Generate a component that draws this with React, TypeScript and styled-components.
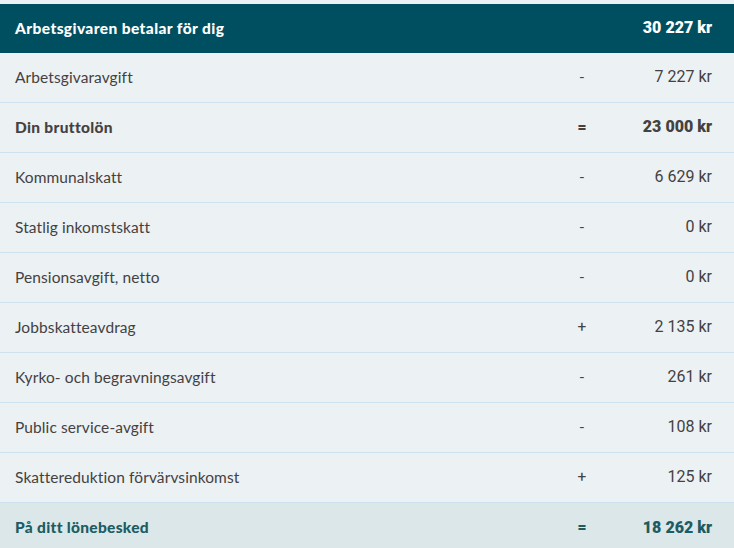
import React from "react";
import styled, { createGlobalStyle } from "styled-components";

const Global = createGlobalStyle`
  html, body { margin: 0; padding: 0; background: #ecf1f4; }
  body { font-family: Lato, "Open Sans", sans-serif; }
`;

const Page = styled.div`
  padding-top: 4px;
  width: 734px;
`;

const Table = styled.div`
  display: flex;
  flex-direction: column;
`;

type Variant = "head" | "normal" | "bold" | "total";

const Row = styled.div<{ $v: Variant }>`
  display: grid;
  grid-template-columns: 1fr 40px 110px;
  align-items: center;
  padding: 0 22px 2px 15px;
  box-sizing: border-box;
  height: ${(p) => (p.$v === "head" ? "49px" : "50px")};
  background: ${(p) =>
    p.$v === "head" ? "#004f60" : p.$v === "total" ? "#dbe7e8" : "#ecf1f4"};
  color: ${(p) =>
    p.$v === "head" ? "#ffffff" : p.$v === "total" ? "#1c5c62" : "#444142"};
  border-bottom: ${(p) =>
    p.$v === "normal" || p.$v === "bold" ? "1px solid #cde1ee" : "none"};
  font-weight: ${(p) => (p.$v === "normal" ? 400 : 900)};
  letter-spacing: ${(p) =>
    p.$v === "head" ? "0.4px" : p.$v === "normal" ? "0.1px" : "0.3px"};
`;

const Label = styled.span`
  font-family: Lato, "Open Sans", sans-serif;
  font-size: 15.5px;
`;

const Op = styled.span`
  font-family: Roboto, "Liberation Sans", sans-serif;
  font-size: 15.5px;
  text-align: center;
  letter-spacing: 0;
`;

const Value = styled.span`
  font-family: Roboto, "Liberation Sans", sans-serif;
  font-size: 16px;
  text-align: right;
  letter-spacing: 0;
`;

const rows: { label: string; op: string; value: string; v: Variant }[] = [
  { label: "Arbetsgivaravgift", op: "-", value: "7 227 kr", v: "normal" },
  { label: "Din bruttolön", op: "=", value: "23 000 kr", v: "bold" },
  { label: "Kommunalskatt", op: "-", value: "6 629 kr", v: "normal" },
  { label: "Statlig inkomstskatt", op: "-", value: "0 kr", v: "normal" },
  { label: "Pensionsavgift, netto", op: "-", value: "0 kr", v: "normal" },
  { label: "Jobbskatteavdrag", op: "+", value: "2 135 kr", v: "normal" },
  { label: "Kyrko- och begravningsavgift", op: "-", value: "261 kr", v: "normal" },
  { label: "Public service-avgift", op: "-", value: "108 kr", v: "normal" },
  { label: "Skattereduktion förvärvsinkomst", op: "+", value: "125 kr", v: "normal" },
  { label: "På ditt lönebesked", op: "=", value: "18 262 kr", v: "total" },
];

export default function App() {
  return (
    <>
      <Global />
      <Page>
        <Table>
          <Row $v="head">
            <Label>Arbetsgivaren betalar för dig</Label>
            <Op />
            <Value>30 227 kr</Value>
          </Row>
          {rows.map((r) => (
            <Row key={r.label} $v={r.v}>
              <Label>{r.label}</Label>
              <Op>{r.op}</Op>
              <Value>{r.value}</Value>
            </Row>
          ))}
        </Table>
      </Page>
    </>
  );
}
